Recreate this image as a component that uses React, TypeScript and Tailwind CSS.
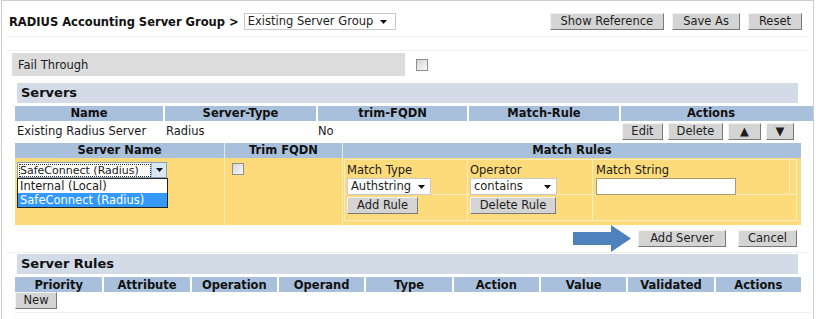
import React from "react";

const Btn = ({ children, className = "" }: { children: React.ReactNode; className?: string }) => (
  <div
    className={`h-[17px] flex items-center justify-center bg-[#d4d4d4] border border-t-[#f2f2f2] border-l-[#f2f2f2] border-r-[#7a7a7a] border-b-[#7a7a7a] text-[11.5px] text-[#1e1e1e] leading-none ${className}`}
  >
    {children}
  </div>
);

const Caret = () => (
  <svg width="7" height="4" viewBox="0 0 7 4" className="shrink-0">
    <polygon points="0,0 7,0 3.5,4" fill="#111" />
  </svg>
);

const Select = ({ value, className = "" }: { value: string; className?: string }) => (
  <div
    className={`h-[17px] flex items-center justify-between bg-white border border-[#c9c9c9] pl-[3px] pr-[5px] text-[11.5px] text-[#222] ${className}`}
  >
    <span>{value}</span>
    <Caret />
  </div>
);

const Check = () => (
  <div className="w-[12px] h-[12px] border border-[#8e8e8e] bg-linear-to-br from-[#d4d4d4] to-[#fbfbfb]" />
);

const SectionHead = ({ title }: { title: string }) => (
  <div className="ml-[15px] w-[781px] h-[20px] bg-[#d2dbe6] flex items-center pl-[4px] text-[13px] font-bold text-[#111]">
    {title}
  </div>
);

const serverCols = [
  { label: "Name", w: "w-[148px]" },
  { label: "Server-Type", w: "w-[153px]" },
  { label: "trim-FQDN", w: "w-[151px]" },
  { label: "Match-Rule", w: "w-[152px]" },
  { label: "Actions", w: "w-[182px]" },
];

const ruleCols = ["Priority", "Attribute", "Operation", "Operand", "Type", "Action", "Value", "Validated", "Actions"];

export default function App() {
  return (
    <div className="w-[816px] h-[319px] bg-white overflow-hidden font-['DejaVu_Sans',Verdana,sans-serif] text-[11.5px] text-[#1a1a1a]">
      <div className="ml-[1px] w-[813px] h-[319px] border-l border-r border-t border-[#cdcdcd] flex flex-col">
        {/* title bar */}
        <div className="h-[36px] border-b border-[#efefef] mx-[5px] flex items-start pt-[12px] pl-[2px] pr-[6px]">
          <span className="h-[17px] leading-[18px] font-bold text-[11.5px] text-[#111]">RADIUS Accounting Server Group &gt;</span>
          <Select value="Existing Server Group" className="ml-[5px] w-[152px] pr-[8px]" />
          <div className="ml-auto flex gap-[8px]">
            <Btn className="px-[10px]">Show Reference</Btn>
            <Btn className="px-[10px]">Save As</Btn>
            <Btn className="px-[10px]">Reset</Btn>
          </div>
        </div>

        {/* fail through */}
        <div className="mt-[13px] mx-[5px] border-t border-[#f1f1f1] pt-[2px] flex items-center">
          <div className="ml-[5px] w-[393px] h-[23px] bg-[#dcdcdc] flex items-center pl-[6px] pt-[2px]">Fail Through</div>
          <div className="ml-[11px]">
            <Check />
          </div>
        </div>

        {/* servers */}
        <div className="mt-[7px]">
          <SectionHead title="Servers" />
        </div>
        <div className="mt-[3px] ml-[13px] flex h-[15px] bg-[#a9c0dc] font-bold text-[#111]">
          {serverCols.map((c, i) => (
            <div key={c.label} className={`${c.w} flex items-center justify-center ${i > 0 ? "border-l-2 border-white" : ""}`}>
              {c.label}
            </div>
          ))}
        </div>
        <div className="ml-[13px] flex h-[20px] items-center pt-[1px]">
          <div className="w-[148px] pl-[2px]">Existing Radius Server</div>
          <div className="w-[153px] pl-[3px]">Radius</div>
          <div className="w-[151px] pl-[2px]">No</div>
          <div className="w-[152px]" />
          <div className="w-[182px] flex gap-[5px] pl-[3px]">
            <Btn className="w-[41px]">Edit</Btn>
            <Btn className="w-[55px]">Delete</Btn>
            <Btn className="w-[33px] text-[9px]">▲</Btn>
            <Btn className="w-[28px] text-[9px]">▼</Btn>
          </div>
        </div>

        {/* edit form */}
        <div className="mt-[2px] ml-[13px] w-[786px]">
          <div className="flex h-[15px] bg-[#a9c0dc] font-bold text-[#111]">
            <div className="w-[209px] flex items-center justify-center">Server Name</div>
            <div className="w-[118px] flex items-center justify-center border-l border-[#e4e9ef]">Trim FQDN</div>
            <div className="flex-1 flex items-center justify-center border-l border-[#e4e9ef]">Match Rules</div>
          </div>
          <div className="flex h-[67px] bg-[#fddb7a]">
            <div className="w-[209px] relative pt-[4px] pl-[2px]">
              <div className="w-[150px] h-[16px] flex items-center bg-white border border-[#8aa0b8]">
                <span className="ml-[1px] flex-1 h-[13px] leading-[12px] border border-dotted border-[#333] whitespace-nowrap overflow-hidden text-[11px]">SafeConnect (Radius)</span>
                <div className="w-[15px] h-[14px] flex items-center justify-center bg-[#d9e6f4] border-l border-[#9fb4cc]">
                  <Caret />
                </div>
              </div>
              <div className="absolute left-[2px] top-[20px] w-[151px] border border-[#222] bg-white z-10">
                <div className="h-[14px] leading-[14px] pl-[2px]">Internal (Local)</div>
                <div className="h-[14px] leading-[14px] pl-[2px] bg-[#3399ff] text-white">SafeConnect (Radius)</div>
              </div>
            </div>
            <div className="w-[118px] border-l border-[#fbe9b5] pt-[5px] pl-[7px]">
              <Check />
            </div>
            <div className="flex-1 border-l border-[#fbe9b5] pl-[1px] pt-[1px] pr-[4px] pb-[4px]">
              <div className="h-[62px] border border-[#fbedc4] flex flex-col">
                <div className="flex h-[35px] border-b border-[#fbedc4]">
                  <div className="w-[123px] border-r border-[#fbedc4] pl-[2px] pt-[4px]">
                    <div className="leading-[13px]">Match Type</div>
                    <Select value="Authstring" className="mt-[1px] w-[84px]" />
                  </div>
                  <div className="w-[125px] border-r border-[#fbedc4] pl-[2px] pt-[4px]">
                    <div className="leading-[13px]">Operator</div>
                    <Select value="contains" className="mt-[1px] w-[87px]" />
                  </div>
                  <div className="w-[197px] border-r border-[#fbedc4] pl-[3px] pt-[4px]">
                    <div className="leading-[13px]">Match String</div>
                    <div className="mt-[1px] w-[140px] h-[17px] bg-white border border-[#a59a76]" />
                  </div>
                  <div className="flex-1" />
                </div>
                <div className="flex flex-1">
                  <div className="w-[123px] border-r border-[#fbedc4] pl-[2px] pt-[2px]">
                    <Btn className="w-[71px]">Add Rule</Btn>
                  </div>
                  <div className="w-[125px] border-r border-[#fbedc4] pl-[2px] pt-[2px]">
                    <Btn className="w-[86px]">Delete Rule</Btn>
                  </div>
                  <div className="flex-1" />
                </div>
              </div>
            </div>
          </div>
        </div>

        {/* add server row */}
        <div className="h-[28px] flex items-center justify-end pr-[11px] mx-[5px] border-b border-[#f3f3f3]">
          <svg width="58" height="28" viewBox="0 0 58 28" className="mr-[7px]">
            <polygon points="0,7 38,7 38,0 58,13.5 38,27 38,20 0,20" fill="#4f81bd" />
          </svg>
          <Btn className="w-[88px]">Add Server</Btn>
          <Btn className="ml-[12px] w-[59px]">Cancel</Btn>
        </div>

        {/* server rules */}
        <div className="mt-[1px]">
          <SectionHead title="Server Rules" />
        </div>
        <div className="mt-[3px] ml-[13px] w-[786px] grid grid-cols-9 h-[15px] bg-[#a9c0dc] font-bold text-[#111]">
          {ruleCols.map((c, i) => (
            <div key={c + i} className={`flex items-center justify-center ${i > 0 ? "border-l-2 border-white" : ""}`}>
              {c}
            </div>
          ))}
        </div>
        <div className="ml-[13px] w-[796px] border-b border-[#f0f0f0] pb-[3px]">
          <Btn className="w-[42px]">New</Btn>
        </div>
      </div>
    </div>
  );
}
